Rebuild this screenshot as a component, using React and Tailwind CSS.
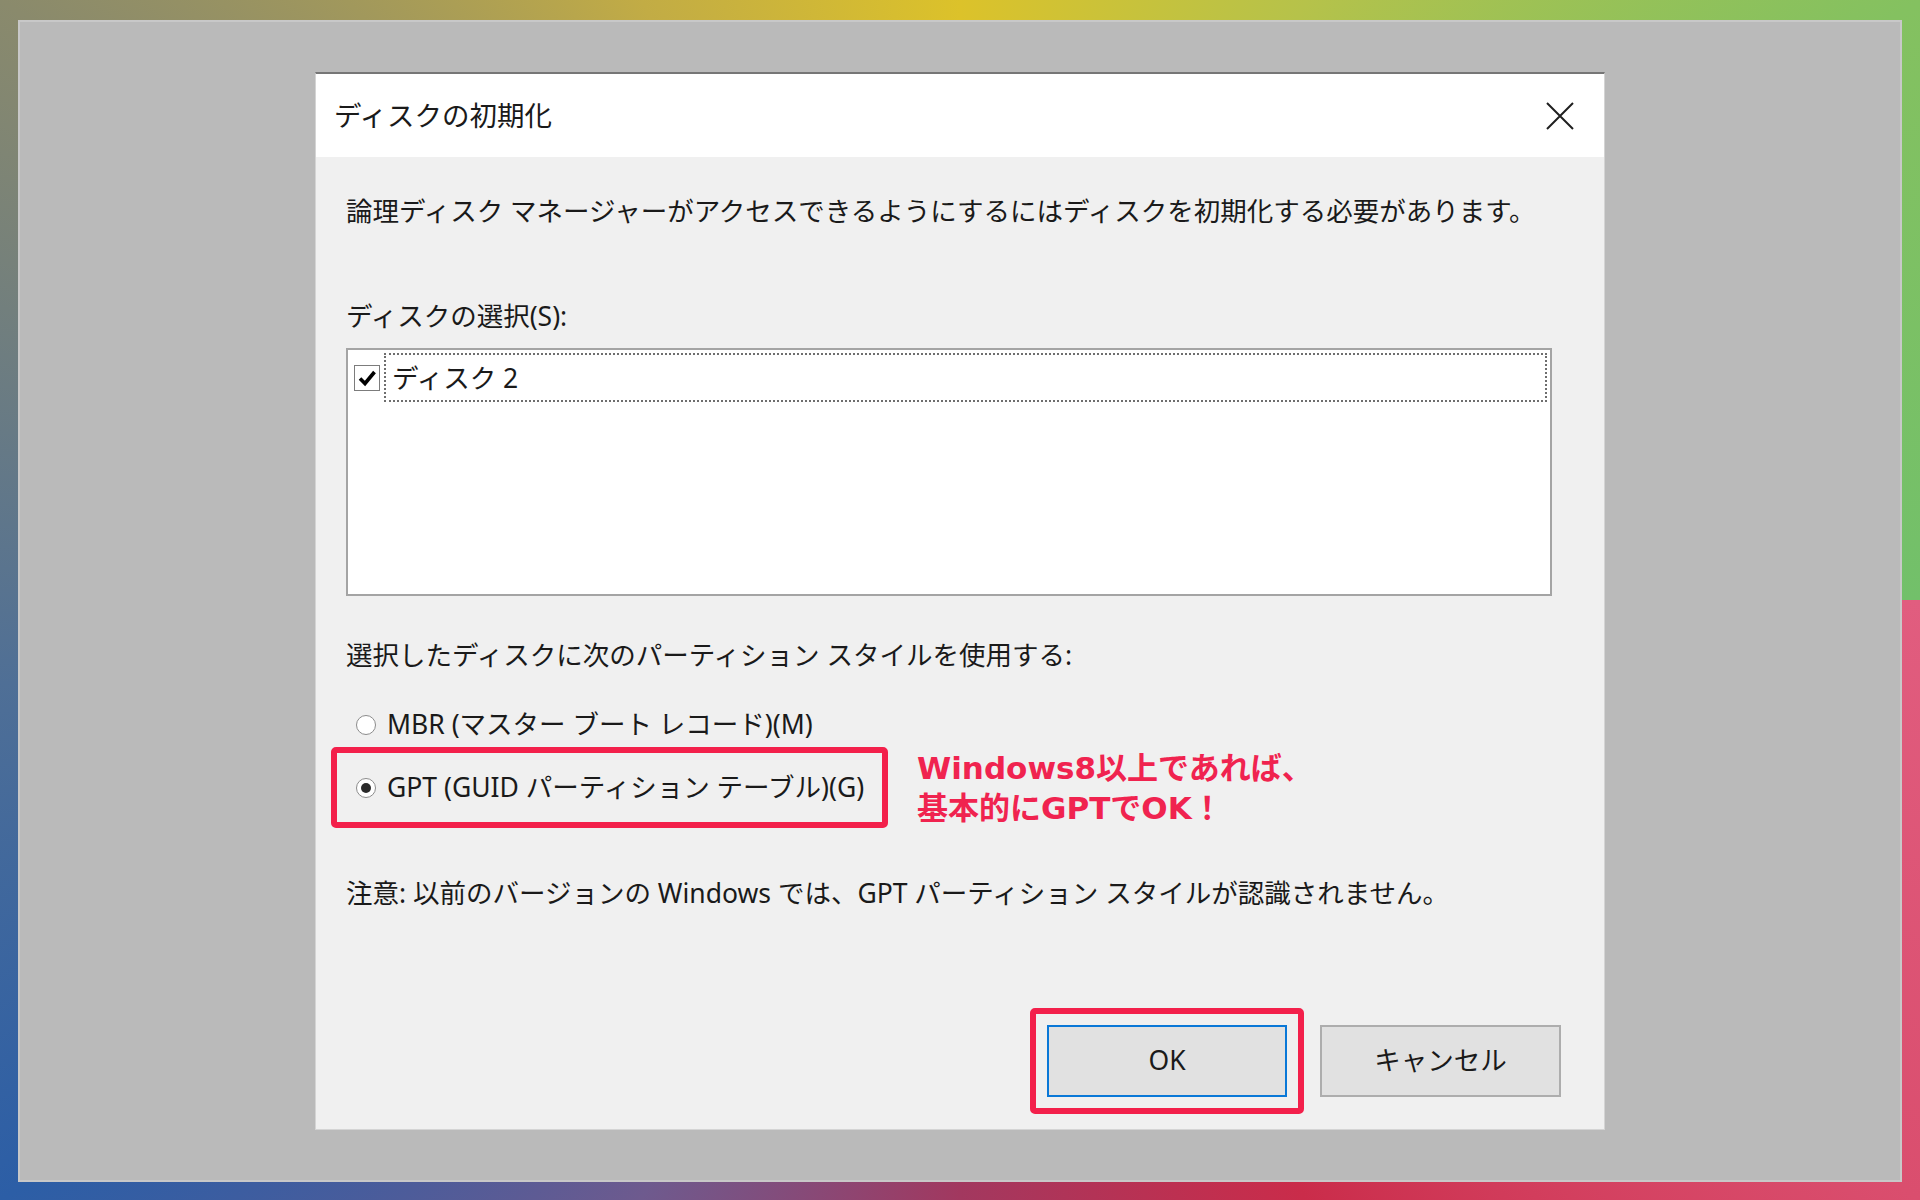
import React from "react";

const UI = "font-['Noto_Sans','Noto_Sans_CJK_JP',sans-serif]";

function Radio({ checked }) {
  return (
    <span className="w-[20px] h-[20px] rounded-full border border-[#8c8c8c] bg-white flex items-center justify-center shrink-0">
      {checked && <span className="w-[10px] h-[10px] rounded-full bg-[#2a2a2a]" />}
    </span>
  );
}

function CloseIcon() {
  return (
    <svg width="30" height="30" viewBox="0 0 30 30" fill="none">
      <path d="M2 2L28 28M28 2L2 28" stroke="#1f1f1f" strokeWidth="2" />
    </svg>
  );
}

export default function App() {
  return (
    <div className="w-full h-[1200px] flex pt-[20px] pb-[18px] px-[18px] bg-[conic-gradient(from_0deg_at_50%_50%,#dcc22a_0deg,#b6c24a_30deg,#84c160_58deg,#72c06a_90deg,#e15d7f_90deg,#da4e6e_122deg,#ca2c4a_150deg,#a2385f_180deg,#6e5a8e_208deg,#2c5ea6_238deg,#4f6f96_265deg,#8a8a6c_302deg,#c2ac45_332deg,#dcc22a_360deg)]">
      <div className="flex-1 bg-[#bababa] border-2 border-[#c8c8c8] flex items-center justify-center">
        {/* dialog */}
        <div className={`${UI} w-[1290px] h-[1058px] flex flex-col bg-[#f0f0f0] border border-[#d4d4d4] border-t-2 border-t-[#767676] text-[#1a1a1a]`}>
          <div className="h-[83px] bg-white flex items-center justify-between pl-[18px] pr-[29px]">
            <span className="text-[27.5px]">ディスクの初期化</span>
            <CloseIcon />
          </div>

          <div className="flex-1 flex flex-col pl-[30px] text-[26.5px]">
            <p className="mt-[36px] leading-[36px]">
              論理ディスク マネージャーがアクセスできるようにするにはディスクを初期化する必要があります。
            </p>

            <p className="mt-[69px] leading-[36px]">ディスクの選択(S):</p>

            <div className="mt-[14px] w-[1206px] h-[248px] bg-white border-2 border-[#a4a4a4] p-[3px]">
              <div className="flex items-center h-[49px]">
                <span className="ml-[3px] mr-[4px] w-[26px] h-[26px] border border-[#7c7c7c] bg-white flex items-center justify-center shrink-0">
                  <svg width="20" height="20" viewBox="0 0 20 20">
                    <path d="M3 10.5L8 15.5L17.5 4" stroke="#000" strokeWidth="3.6" fill="none" />
                  </svg>
                </span>
                <div className="flex-1 h-full border-2 border-dotted border-[#6e6e6e] flex items-center pl-[6px] leading-[36px]">
                  ディスク 2
                </div>
              </div>
            </div>

            <p className="mt-[41px] leading-[36px]">選択したディスクに次のパーティション スタイルを使用する:</p>

            <div className="mt-[34px] h-[36px] flex items-center gap-[11px] pl-[10px]">
              <Radio />
              <span>MBR (マスター ブート レコード)(M)</span>
            </div>

            <div className="mt-[4px] flex items-center">
              <div className="ml-[-15px] w-[557px] h-[81px] border-[6px] border-[#f3204b] rounded-[5px] flex items-center gap-[11px] pl-[19px]">
                <Radio checked />
                <span>GPT (GUID パーティション テーブル)(G)</span>
              </div>
              <div className="ml-[29px] font-['DejaVu_Sans','Noto_Sans_CJK_JP',sans-serif] font-bold text-[31px] leading-[40px] text-[#f0234f]">
                <div>Windows8以上であれば、</div>
                <div>基本的にGPTでOK！</div>
              </div>
            </div>

            <p className="mt-[47px] leading-[36px]">
              注意: 以前のバージョンの Windows では、GPT パーティション スタイルが認識されません。
            </p>

            <div className="mt-auto flex justify-end items-center gap-[16px] pr-[43px] pb-[15px]">
              <div className="border-[6px] border-[#f3204b] rounded-[5px] p-[11px]">
                <button className="w-[240px] h-[72px] bg-[#e1e1e1] border-2 border-[#0a78d7] text-[26.5px] flex items-center justify-center">
                  OK
                </button>
              </div>
              <button className="w-[241px] h-[72px] bg-[#e1e1e1] border-2 border-[#adadad] text-[26.5px] flex items-center justify-center">
                キャンセル
              </button>
            </div>
          </div>
        </div>
      </div>
    </div>
  );
}
